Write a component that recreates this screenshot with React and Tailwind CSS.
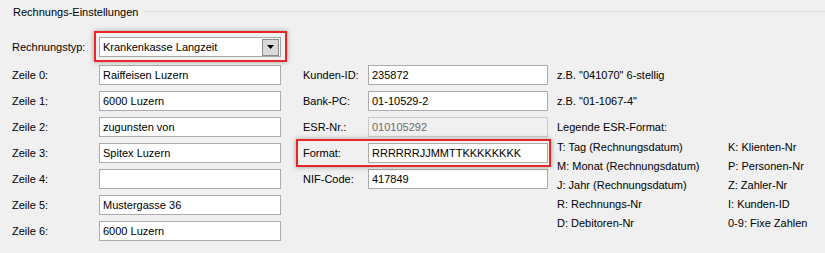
import React from "react";

const font = { fontFamily: '"Liberation Sans", Arial, sans-serif' };

function TextBox({ value, disabled }) {
  return (
    <div
      className={
        "h-[20px] w-full flex items-center pl-[3px] border " +
        (disabled
          ? "bg-[#f0f0f0] border-[#cccccc] text-[#6d6d6d]"
          : "bg-white border-[#ababab] text-black")
      }
    >
      <span className="whitespace-nowrap">{value}</span>
    </div>
  );
}

function Row({ label, labelW, boxW, children }) {
  return (
    <div className="flex items-center h-[20px]">
      <div className="shrink-0 whitespace-nowrap" style={{ width: labelW }}>
        {label}
      </div>
      <div className="shrink-0" style={{ width: boxW }}>
        {children}
      </div>
    </div>
  );
}

export default function App() {
  const zeilen = [
    "Raiffeisen Luzern",
    "6000 Luzern",
    "zugunsten von",
    "Spitex Luzern",
    "",
    "Mustergasse 36",
    "6000 Luzern",
  ];
  const legend = [
    ["T: Tag (Rechnungsdatum)", "K: Klienten-Nr"],
    ["M: Monat (Rechnungsdatum)", "P: Personen-Nr"],
    ["J: Jahr (Rechnungsdatum)", "Z: Zahler-Nr"],
    ["R: Rechnungs-Nr", "I: Kunden-ID"],
    ["D: Debitoren-Nr", "0-9: Fixe Zahlen"],
  ];
  return (
    <div
      className="w-[825px] h-[253px] bg-[#f0f0f0] overflow-hidden text-[11px] text-black"
      style={font}
    >
      {/* group header */}
      <div className="flex items-center h-[24px] pl-[13px]">
        <span className="whitespace-nowrap">Rechnungs-Einstellungen</span>
        <div className="flex-1 ml-[5px] h-px bg-[#d8dde3] mt-[-1px]" />
      </div>

      <div className="flex pt-[13px] pl-[12px]">
        {/* column 1 */}
        <div className="flex flex-col w-[269px]">
          <div className="relative">
            <Row label="Rechnungstyp:" labelW={87} boxW={182}>
              <div className="h-[20px] w-full bg-white border border-[#a5a5a5] flex items-center pl-[3px] pr-[1px]">
                <span className="flex-1 whitespace-nowrap">Krankenkasse Langzeit</span>
                <div className="w-[17px] h-[17px] bg-[#dadada] border border-[#8a8a8a] flex items-center justify-center">
                  <svg width="7" height="4" viewBox="0 0 7 4">
                    <path d="M0 0H7L3.5 4Z" fill="#000" />
                  </svg>
                </div>
              </div>
            </Row>
            <div className="absolute left-[82px] top-[-6px] w-[193px] h-[31px] border-2 border-[#e8262a] shadow-[0_0_5px_rgba(0,0,0,0.35)] pointer-events-none" />
          </div>
          <div className="flex flex-col gap-[6px] mt-[8px]">
            {zeilen.map((z, i) => (
              <Row key={i} label={`Zeile ${i}:`} labelW={87} boxW={182}>
                <TextBox value={z} />
              </Row>
            ))}
          </div>
        </div>

        {/* column 2 */}
        <div className="flex flex-col gap-[6px] pt-[28px] ml-[22px] w-[245px]">
          <Row label="Kunden-ID:" labelW={65} boxW={180}>
            <TextBox value="235872" />
          </Row>
          <Row label="Bank-PC:" labelW={65} boxW={180}>
            <TextBox value="01-10529-2" />
          </Row>
          <Row label="ESR-Nr.:" labelW={65} boxW={180}>
            <TextBox value="010105292" disabled />
          </Row>
          <div className="relative">
            <Row label="Format:" labelW={65} boxW={180}>
              <TextBox value="RRRRRRJJMMTTKKKKKKKK" />
            </Row>
            <div className="absolute left-[-7px] top-[-4px] w-[255px] h-[28px] border-2 border-[#e8262a] shadow-[0_0_5px_rgba(0,0,0,0.35)] pointer-events-none" />
          </div>
          <Row label="NIF-Code:" labelW={65} boxW={180}>
            <TextBox value="417849" />
          </Row>
        </div>

        {/* column 3 */}
        <div className="flex flex-col pt-[28px] ml-[9px]">
          <div className="h-[20px] flex items-center whitespace-nowrap">
            z.B. "041070" 6-stellig
          </div>
          <div className="h-[20px] mt-[6px] flex items-center whitespace-nowrap">
            z.B. "01-1067-4"
          </div>
          <div className="h-[20px] mt-[6px] flex items-center whitespace-nowrap">
            Legende ESR-Format:
          </div>
          <div className="grid grid-cols-[171px_auto] auto-rows-[19px] mt-[1px]">
            {legend.map(([a, b], i) => (
              <React.Fragment key={i}>
                <div className="flex items-center whitespace-nowrap">{a}</div>
                <div className="flex items-center whitespace-nowrap">{b}</div>
              </React.Fragment>
            ))}
          </div>
        </div>
      </div>
    </div>
  );
}
